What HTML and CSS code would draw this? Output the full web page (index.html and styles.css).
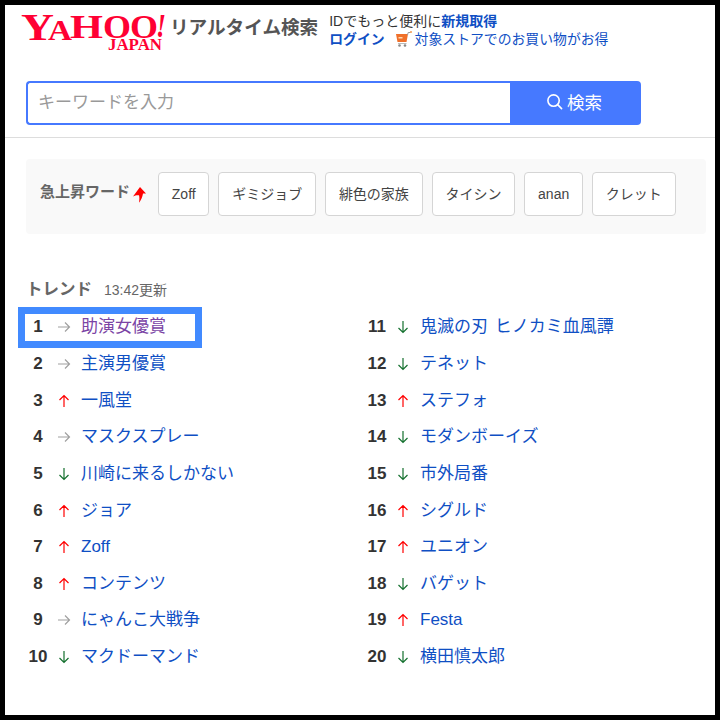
FILE: index.html
```html
<!DOCTYPE html>
<html lang="ja">
<head>
    <meta charset="UTF-8">
    <title>リアルタイム検索</title>
    <link rel="stylesheet" href="styles.css">
</head>
<body>
<div class="page">
    <header class="header">
        <div class="top">
            <svg class="logo" width="149" height="50" viewBox="0 0 149 50">
                <g class="logoText">
                    <text x="0" y="35" font-size="37" textLength="33" lengthAdjust="spacingAndGlyphs">Y</text>
                    <text x="27" y="35" font-size="29" textLength="24" lengthAdjust="spacingAndGlyphs">A</text>
                    <text x="49" y="33" font-size="33" textLength="33" lengthAdjust="spacingAndGlyphs">H</text>
                    <text x="82" y="33" font-size="33" textLength="28" lengthAdjust="spacingAndGlyphs">O</text>
                    <text x="109" y="33" font-size="33" textLength="28" lengthAdjust="spacingAndGlyphs">O</text>
                    <text class="logoBang" x="135" y="32" font-size="34" textLength="10" lengthAdjust="spacingAndGlyphs">!</text>
                    <text x="87" y="45" font-size="17" textLength="54" lengthAdjust="spacingAndGlyphs">JAPAN</text>
                </g>
            </svg>
            <div class="serviceName">リアルタイム検索</div>
            <div class="promo">
                <p>IDでもっと便利に<a class="strong" href="#">新規取得</a></p>
                <p class="promoLine">
                    <a class="strong" href="#">ログイン</a>
                    <svg class="cart" width="18" height="16" viewBox="0 0 18 16">
                        <path d="M1 3h12l-1.500 8H2.500z" fill="#f0702a"/>
                        <path d="M3.500 6h4v1.500h-4z" fill="#ffd9b0"/>
                        <path d="M12.500 4l.7-2.500h2.300" fill="none" stroke="#999" stroke-width="1"/>
                        <circle cx="16" cy="1" r="1" fill="#f59a50"/>
                        <path d="M3 12.500h8.500" stroke="#bbb" stroke-width="1"/>
                        <circle cx="4.500" cy="14.500" r="1.300" fill="#888"/>
                        <circle cx="10" cy="14.500" r="1.300" fill="#888"/>
                    </svg>
                    <a href="#">対象ストアでのお買い物がお得</a>
                </p>
            </div>
        </div>
        <form class="search">
            <div class="searchInput">キーワードを入力</div>
            <button type="button" class="searchBtn">
                <svg width="17" height="17" viewBox="0 0 18 18">
                    <circle cx="8" cy="8" r="6" fill="none" stroke="#fff" stroke-width="1.700"/>
                    <path d="M12.300 12.300L16.500 16.500" stroke="#fff" stroke-width="1.700" stroke-linecap="round"/>
                </svg>
                検索
            </button>
        </form>
    </header>

    <section class="rising">
        <span class="risingLabel">急上昇ワード</span>
        <svg class="risingIcon" width="13" height="16" viewBox="0 0 13 16">
            <path d="M7 0L13 6.500H10C9.500 10 8 13 6 15.800C6.500 12 6.500 10 6 8.200C4 8 2 8.300 0 9.500z" fill="#f00"/>
        </svg>
        <a class="chip" href="#">Zoff</a>
        <a class="chip" href="#">ギミジョブ</a>
        <a class="chip" href="#">緋色の家族</a>
        <a class="chip" href="#">タイシン</a>
        <a class="chip" href="#">anan</a>
        <a class="chip" href="#">クレット</a>
    </section>

    <h2 class="trendTitle">トレンド<span class="trendTime">13:42更新</span></h2>

    <svg class="arrowDefs" width="0" height="0">
        <symbol id="arrowFlat" viewBox="0 0 14 14">
            <path d="M1 7H12.500M8 2.500L12.500 7L8 11.500" fill="none" stroke="currentColor" stroke-width="1.200"/>
        </symbol>
        <symbol id="arrowUp" viewBox="0 0 14 14">
            <path d="M7 13V1.500M2.500 6L7 1.500L11.500 6" fill="none" stroke="currentColor" stroke-width="1.200"/>
        </symbol>
        <symbol id="arrowDown" viewBox="0 0 14 14">
            <path d="M7 1V12.500M2.500 8L7 12.500L11.500 8" fill="none" stroke="currentColor" stroke-width="1.200"/>
        </symbol>
    </svg>

    <ol class="ranking">
        <li class="rankItem current"><b>1</b><svg class="flat"><use href="#arrowFlat"/></svg><a class="visited" href="#">助演女優賞</a></li>
        <li class="rankItem"><b>11</b><svg class="down"><use href="#arrowDown"/></svg><a href="#">鬼滅の刃 ヒノカミ血風譚</a></li>
        <li class="rankItem"><b>2</b><svg class="flat"><use href="#arrowFlat"/></svg><a href="#">主演男優賞</a></li>
        <li class="rankItem"><b>12</b><svg class="down"><use href="#arrowDown"/></svg><a href="#">テネット</a></li>
        <li class="rankItem"><b>3</b><svg class="up"><use href="#arrowUp"/></svg><a href="#">一風堂</a></li>
        <li class="rankItem"><b>13</b><svg class="up"><use href="#arrowUp"/></svg><a href="#">ステフォ</a></li>
        <li class="rankItem"><b>4</b><svg class="flat"><use href="#arrowFlat"/></svg><a href="#">マスクスプレー</a></li>
        <li class="rankItem"><b>14</b><svg class="down"><use href="#arrowDown"/></svg><a href="#">モダンボーイズ</a></li>
        <li class="rankItem"><b>5</b><svg class="down"><use href="#arrowDown"/></svg><a href="#">川崎に来るしかない</a></li>
        <li class="rankItem"><b>15</b><svg class="down"><use href="#arrowDown"/></svg><a href="#">市外局番</a></li>
        <li class="rankItem"><b>6</b><svg class="up"><use href="#arrowUp"/></svg><a href="#">ジョア</a></li>
        <li class="rankItem"><b>16</b><svg class="up"><use href="#arrowUp"/></svg><a href="#">シグルド</a></li>
        <li class="rankItem"><b>7</b><svg class="up"><use href="#arrowUp"/></svg><a href="#">Zoff</a></li>
        <li class="rankItem"><b>17</b><svg class="up"><use href="#arrowUp"/></svg><a href="#">ユニオン</a></li>
        <li class="rankItem"><b>8</b><svg class="up"><use href="#arrowUp"/></svg><a href="#">コンテンツ</a></li>
        <li class="rankItem"><b>18</b><svg class="down"><use href="#arrowDown"/></svg><a href="#">バゲット</a></li>
        <li class="rankItem"><b>9</b><svg class="flat"><use href="#arrowFlat"/></svg><a href="#">にゃんこ大戦争</a></li>
        <li class="rankItem"><b>19</b><svg class="up"><use href="#arrowUp"/></svg><a href="#">Festa</a></li>
        <li class="rankItem"><b>10</b><svg class="down"><use href="#arrowDown"/></svg><a href="#">マクドーマンド</a></li>
        <li class="rankItem"><b>20</b><svg class="down"><use href="#arrowDown"/></svg><a href="#">横田慎太郎</a></li>
    </ol>
</div>
</body>
</html>
```

FILE: styles.css
```css
* {
    box-sizing: border-box;
}

html, body {
    margin: 0;
    height: 720px;
    background-color: #000;
    overflow: hidden;
}

body {
    padding: 5px;
    font-family: "Liberation Sans", "Noto Sans CJK JP", sans-serif;
    color: #333;
}

a {
    color: #0f4fc4;
    text-decoration: none;
}

p {
    margin: 0;
}

.page {
    height: 710px;
    background-color: #fff;
}

.header {
    height: 133px;
    border-bottom: 1px solid #ddd;
}

.top {
    display: flex;
    padding-left: 16px;
}

.logo {
    display: block;
    flex-shrink: 0;
}

.logoText {
    fill: #ff0033;
    font-family: "Liberation Serif", serif;
    font-weight: bold;
}

.logoBang {
    font-style: italic;
}

.serviceName {
    margin-top: 10px;
    font-size: 18.600px;
    font-weight: bold;
    color: #555;
    line-height: 26px;
    white-space: nowrap;
}

.promo {
    margin: 7px 0 0 11px;
    font-size: 14px;
    line-height: 18px;
    white-space: nowrap;
}

.promoLine {
    display: flex;
    align-items: center;
    font-size: 13.850px;
}

.strong {
    font-weight: bold;
}

.cart {
    margin: 0 2px 0 10px;
}

.search {
    display: flex;
    width: 615px;
    height: 44px;
    margin: 26px 0 0 21px;
}

.searchInput {
    flex: 1;
    border: 2px solid #4679ff;
    border-right: 0;
    border-radius: 4px 0 0 4px;
    padding-left: 10px;
    font-size: 17px;
    line-height: 40px;
    color: #999;
}

.searchBtn {
    width: 131px;
    border: 0;
    border-radius: 0 4px 4px 0;
    padding: 0 3px 3px 0;
    background-color: #4679ff;
    color: #fff;
    font: inherit;
    font-size: 17.500px;
    display: flex;
    align-items: center;
    justify-content: center;
    gap: 4px;
}

.rising {
    display: flex;
    align-items: flex-start;
    width: 680px;
    height: 75px;
    margin: 21px 0 0 21px;
    padding: 13px 0 0 14px;
    background-color: #f9f9f9;
    border-radius: 4px;
}

.risingLabel {
    font-size: 15px;
    font-weight: bold;
    line-height: 40px;
    color: #666;
    white-space: nowrap;
}

.risingIcon {
    flex-shrink: 0;
    margin: 15px 12px 0 3px;
}

.chip {
    display: block;
    height: 44px;
    line-height: 42px;
    margin-right: 9px;
    padding: 0 12.800px;
    border: 1px solid #d5d5d5;
    border-radius: 4px;
    background-color: #fff;
    color: #444;
    font-size: 14px;
    white-space: nowrap;
}

.trendTitle {
    margin: 43px 0 0 21px;
    font-size: 16.500px;
    font-weight: bold;
    line-height: 24px;
    color: #666;
}

.trendTime {
    margin-left: 12px;
    font-size: 14px;
    font-weight: normal;
}

.arrowDefs {
    display: block;
}

.ranking {
    display: grid;
    grid-template-columns: 339px 339px;
    grid-auto-rows: 36.650px;
    margin: 7px 0 0 15px;
    padding: 0;
    list-style: none;
}

.rankItem {
    display: flex;
    align-items: center;
    font-size: 17px;
    white-space: nowrap;
}

.rankItem b {
    width: 30px;
    margin-left: 3px;
    text-align: center;
    line-height: 20px;
}

.rankItem svg {
    width: 14px;
    height: 14px;
    flex-shrink: 0;
    margin: 0 10.500px 0 3.500px;
}

.rankItem a {
    line-height: 20px;
    word-spacing: 2px;
}

.current {
    width: 180px;
    outline: 7px solid #418aff;
    outline-offset: -5px;
}

.rankItem .visited {
    color: #7b44a5;
}

.flat {
    color: #a0a0a0;
}

.up {
    color: #f00;
}

.down {
    color: #14702e;
}
```
